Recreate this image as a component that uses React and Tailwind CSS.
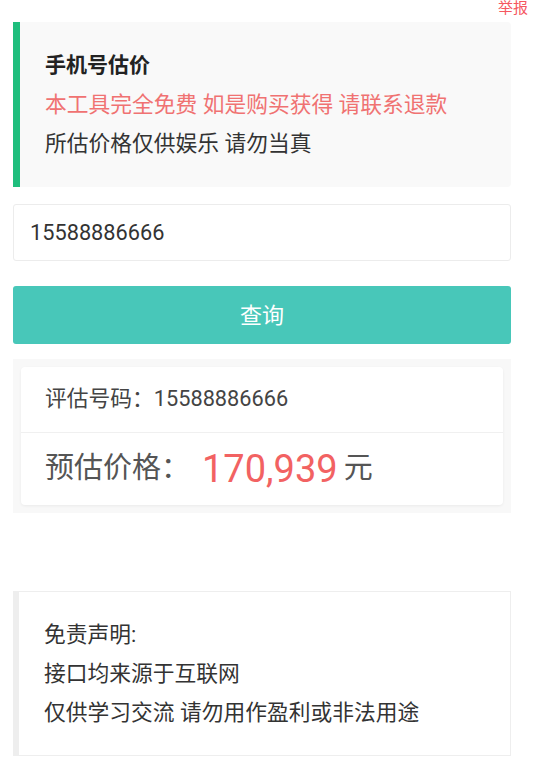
export default function App() {
  return (
    <div
      className="relative min-h-[766px] bg-white pl-[13px] pr-[24px] pt-[22px] pb-[10px]"
      style={{ fontFamily: "Roboto, 'Noto Sans CJK SC', sans-serif" }}
    >
      <a className="absolute right-[7px] top-0 text-[15px] leading-[16px] text-[#f5575f]">举报</a>

      {/* 标题卡片 */}
      <div className="rounded-r-[4px] border-l-[7px] border-[#1fbe7d] bg-[#f9f9f9] py-[24px] pl-[25px] pr-4">
        <div className="text-[21px] font-bold leading-[39px] text-[#222]">手机号估价</div>
        <div className="text-[21.75px] leading-[39px] text-[#f07272]">本工具完全免费 如是购买获得 请联系退款</div>
        <div className="text-[21.75px] leading-[39px] text-[#333]">所估价格仅供娱乐 请勿当真</div>
      </div>

      <input
        defaultValue="15588886666"
        className="mt-[17px] block h-[57px] w-full rounded-[3px] border border-[#ececec] bg-white px-[16px] text-[21.75px] text-[#333] outline-none"
      />

      <button className="mt-[25px] block h-[58px] w-full rounded-[3px] bg-[#48c7b9] text-[22px] text-white">
        查询
      </button>

      {/* 结果 */}
      <div className="mt-[15px] bg-[#f8f8f8] p-[8px]">
        <div className="rounded-[4px] bg-white shadow-[0_1px_3px_rgba(0,0,0,0.06)]">
          <div className="flex h-[66px] items-center border-b border-[#f0f0f0] px-[24px] text-[21.75px] text-[#444]">
            评估号码：15588886666
          </div>
          <div className="flex h-[72px] items-center px-[24px] text-[#555]">
            <span className="text-[29px]">预估价格：</span>
            <span className="ml-[12px] text-[38px] text-[#f26262]">170,939</span>
            <span className="ml-[6px] text-[29px]">元</span>
          </div>
        </div>
      </div>

      {/* 免责声明 */}
      <div className="mt-[78px] border border-l-[6px] border-[#eeeeee] bg-white py-[23px] pl-[25px] pr-4 text-[21.75px] leading-[39px] text-[#333]">
        <div>免责声明:</div>
        <div>接口均来源于互联网</div>
        <div>仅供学习交流 请勿用作盈利或非法用途</div>
      </div>
    </div>
  );
}
